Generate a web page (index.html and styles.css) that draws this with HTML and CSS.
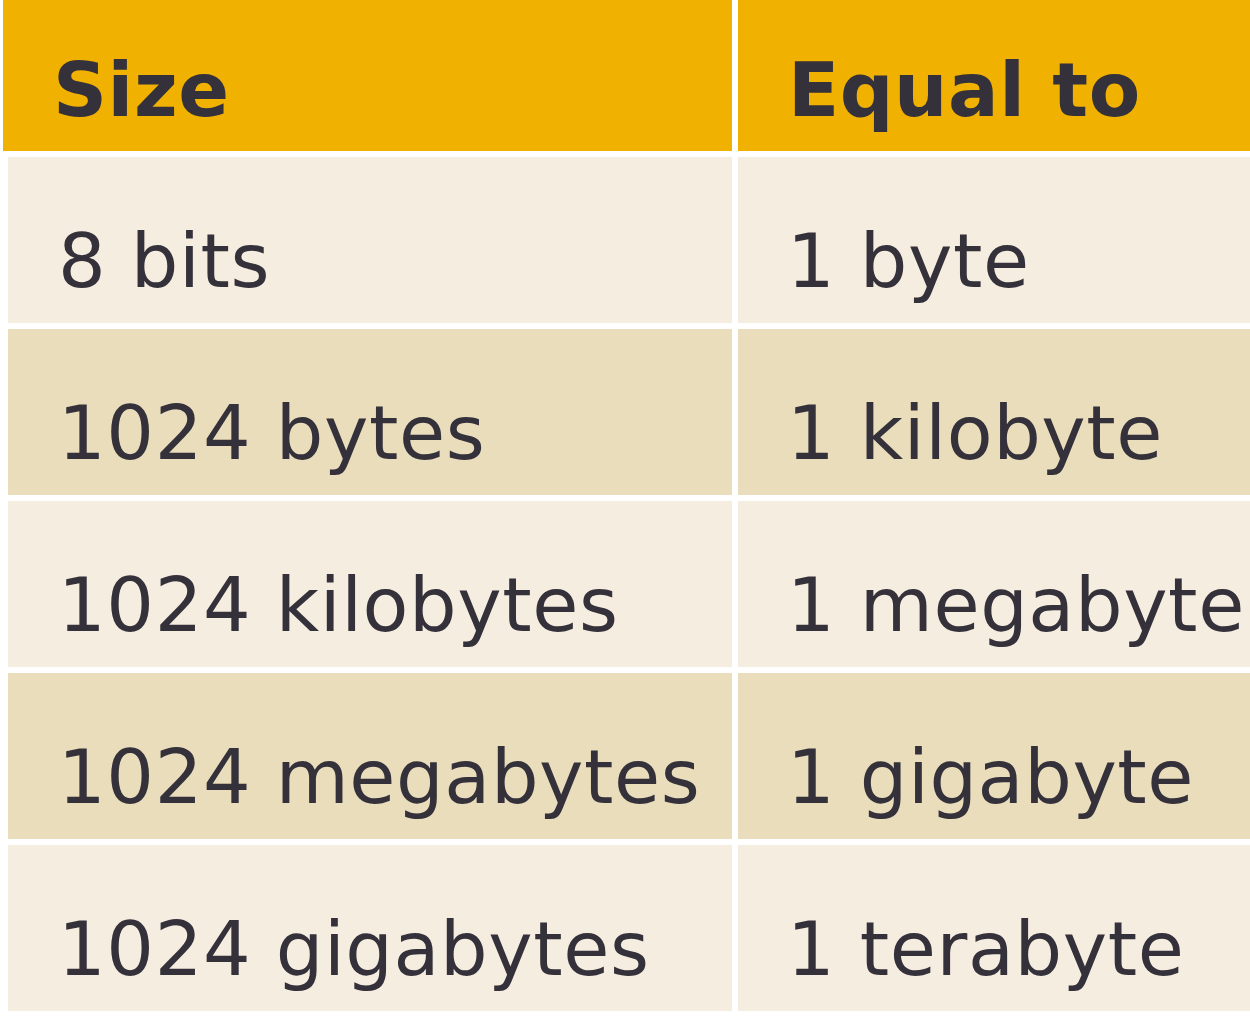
FILE: index.html
```html
<!DOCTYPE html>
<html>
<head>
<meta charset="utf-8">
<link rel="stylesheet" href="styles.css">
</head>
<body>
<table class="units">
  <thead>
    <tr><th>Size</th><th>Equal to</th></tr>
  </thead>
  <tbody>
    <tr class="odd"><td>8 bits</td><td>1 byte</td></tr>
    <tr class="even"><td>1024 bytes</td><td>1 kilobyte</td></tr>
    <tr class="odd"><td>1024 kilobytes</td><td>1 megabyte</td></tr>
    <tr class="even"><td>1024 megabytes</td><td>1 gigabyte</td></tr>
    <tr class="odd"><td>1024 gigabytes</td><td>1 terabyte</td></tr>
  </tbody>
</table>
</body>
</html>
```
FILE: styles.css
```css
html, body {
  margin: 0;
  padding: 0;
  background: #ffffff;
  overflow: hidden;
}

.units {
  border-collapse: separate;
  border-spacing: 0;
  margin-left: 3px;
  font-family: "DejaVu Sans", Verdana, sans-serif;
  font-size: 75px;
  line-height: 87px;
  letter-spacing: 0.6px;
  color: #34313a;
  table-layout: fixed;
  width: 1400px;
}

.units th,
.units td {
  text-align: left;
  white-space: nowrap;
  vertical-align: top;
}

.units th {
  background: #f0b100;
  font-weight: bold;
  padding: 47px 0 17px 50px;
  width: 679px;
}

.units th + th {
  border-left: 6px solid #ffffff;
  padding-left: 50px;
  width: auto;
}

.units td {
  border-top: 6px solid #ffffff;
  padding: 61px 0 18px 50px;
}

.units td:first-child {
  border-left: 5px solid #ffffff;
}

.units td + td {
  border-left: 6px solid #ffffff;
  padding-left: 49px;
}

.units tr.odd td {
  background: #f6ede1;
}

.units tr.even td {
  background: #e9ddbb;
}
```
